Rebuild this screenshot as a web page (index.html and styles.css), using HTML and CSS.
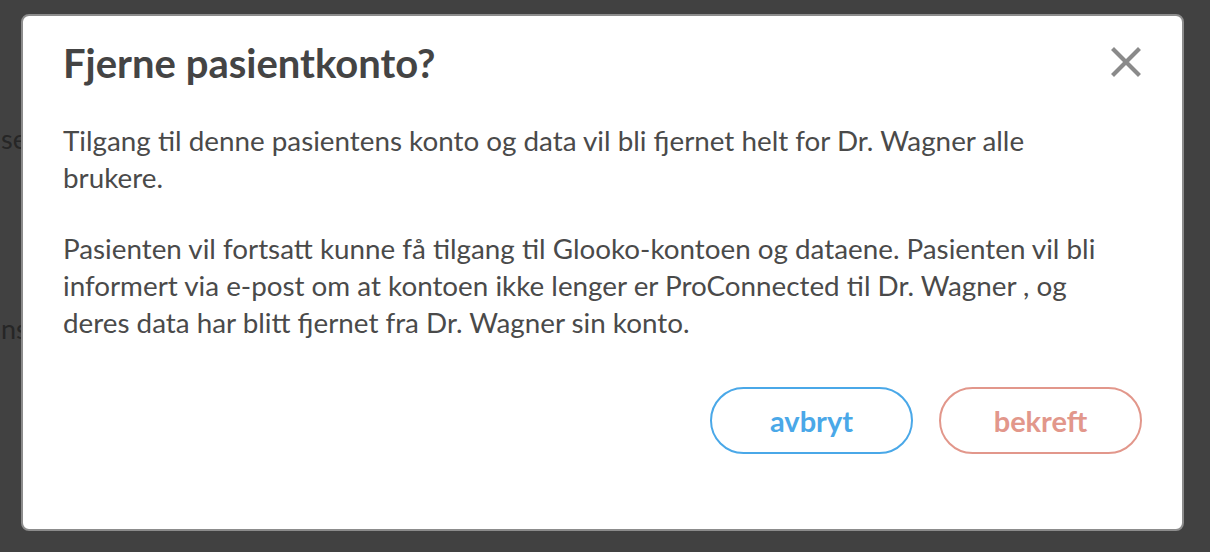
FILE: index.html
```html
<!DOCTYPE html>
<html lang="no">
<head>
  <meta charset="UTF-8">
  <meta name="viewport" content="width=device-width, initial-scale=1.0">
  <title>Fjerne pasientkonto</title>
  <link rel="stylesheet" href="styles.css">
</head>
<body>
  <div class="page">
    <p class="line-a">se pasientdata</p>
    <p class="line-b">ns innstillinger</p>
  </div>

  <div class="overlay">
    <div class="modal">
      <div class="modal-header">
        <h2>Fjerne pasientkonto?</h2>
        <button class="close" aria-label="Lukk">
          <svg width="30" height="30" viewBox="0 0 30 30">
            <path d="M3 3 L27 27 M27 3 L3 27" stroke="#8a8a8a" stroke-width="4.2" stroke-linecap="square"/>
          </svg>
        </button>
      </div>
      <div class="modal-body">
        <p>Tilgang til denne pasientens konto og data vil bli fjernet helt for Dr. Wagner alle brukere.</p>
        <p>Pasienten vil fortsatt kunne få tilgang til Glooko-kontoen og dataene. Pasienten vil bli informert via e-post om at kontoen ikke lenger er ProConnected til Dr. Wagner , og deres data har blitt fjernet fra Dr. Wagner sin konto.</p>
      </div>
      <div class="modal-footer">
        <button class="btn btn-cancel">avbryt</button>
        <button class="btn btn-confirm">bekreft</button>
      </div>
    </div>
  </div>
</body>
</html>
```

FILE: styles.css
```css
body {
  margin: 0;
  font-family: Lato, "Open Sans", sans-serif;
  background-color: #414141;
  height: 552px;
  overflow: hidden;
}

.page {
  padding-left: 1px;
  color: #262626;
  font-size: 27px;
}

.page p {
  margin: 0;
  white-space: nowrap;
}

.line-a {
  padding-top: 122px;
}

.line-b {
  padding-top: 157px;
}

.overlay {
  position: absolute;
  top: 14px;
  left: 21px;
}

.modal {
  box-sizing: border-box;
  width: 1163px;
  height: 517px;
  background: #ffffff;
  border: 2px solid #8c8c8c;
  border-radius: 8px;
  padding: 19px 40px 0 40px;
  color: #4a4a4a;
}

.modal-header {
  display: flex;
  justify-content: space-between;
  align-items: flex-start;
}

.modal-header h2 {
  margin: 0;
  font-size: 40px;
  font-weight: 700;
  line-height: 56px;
  color: #444444;
}

.close {
  background: none;
  border: none;
  padding: 0;
  margin: 12px 1px 0 0;
  cursor: pointer;
  line-height: 0;
}

.modal-body {
  margin-top: 31px;
  font-size: 27.8px;
  line-height: 37px;
  padding-right: 20px;
}

.modal-body p {
  margin: 0 0 34px 0;
}

.modal-body p:last-child {
  margin-bottom: 0;
}

.modal-footer {
  display: flex;
  justify-content: flex-end;
  gap: 26px;
  margin-top: 46px;
}

.btn {
  width: 203px;
  height: 67px;
  background: #ffffff;
  border-radius: 34px;
  font-family: Lato, sans-serif;
  font-size: 29px;
  font-weight: 700;
  cursor: pointer;
}

.btn-cancel {
  border: 2px solid #4aa8e8;
  color: #4aa8e8;
}

.btn-confirm {
  border: 2px solid #e2978b;
  color: #e2978b;
}
```
